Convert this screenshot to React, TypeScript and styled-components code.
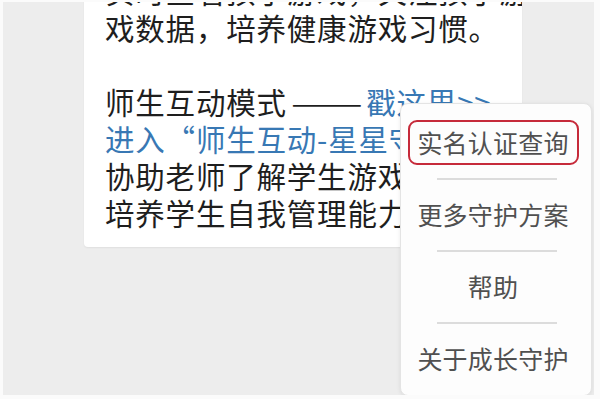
import React from "react";
import styled, { createGlobalStyle } from "styled-components";

const GlobalStyles = createGlobalStyle`
  html,
  body {
    margin: 0;
    background: #ffffff;
  }

  body {
    font-family: "Noto Sans CJK SC", "Noto Sans", sans-serif;
  }
`;

const Page = styled.div`
  position: relative;
  box-sizing: border-box;
  width: 600px;
  height: 399px;
  overflow: hidden;
  background: #ededed;
  border-style: solid;
  border-color: #fbfbfb;
  border-width: 2px 6px 4px 3px;
  padding-left: 81px;
`;

const Bubble = styled.div`
  box-sizing: border-box;
  width: 438px;
  margin-top: -47px;
  padding: 17px 21px 16px;
  background: #ffffff;
  border-radius: 4px;
  box-shadow: 0 1px 2px rgba(0, 0, 0, 0.06);
  overflow: hidden;
`;

const Paragraph = styled.p`
  margin: 0 0 37px;
  color: #1e1e1e;
  font-size: 29.5px;
  line-height: 37px;
  letter-spacing: 0.8px;
  white-space: nowrap;

  &:last-child {
    margin-bottom: 0;
  }
`;

const Link = styled.span`
  color: #3878b4;
`;

const Dash = styled.span`
  display: inline-block;
  transform: scaleX(1.45);
  transform-origin: left center;
  margin: 0 28px 0 4px;
  letter-spacing: -2px;
`;

const Menu = styled.ul`
  position: absolute;
  left: 397px;
  top: 101px;
  box-sizing: border-box;
  width: 192px;
  margin: 0;
  padding: 3px 0 0;
  list-style: none;
  background: #fdfdfd;
  border: 1px solid #e4e4e4;
  border-radius: 8px;
  box-shadow: 0 1px 4px rgba(0, 0, 0, 0.08);

  &::after {
    content: "";
    position: absolute;
    left: 110px;
    bottom: -5px;
    width: 8px;
    height: 8px;
    background: #fdfdfd;
    border-right: 1px solid #e4e4e4;
    border-bottom: 1px solid #e4e4e4;
    transform: rotate(45deg);
  }
`;

const MenuItem = styled.li`
  display: flex;
  align-items: center;
  justify-content: center;
  height: 72px;
  position: relative;

  & + &::before {
    content: "";
    position: absolute;
    top: -1px;
    left: 36px;
    right: 34px;
    height: 2px;
    background: #dcdcdc;
  }
`;

const MenuLabel = styled.span<{ $marked?: boolean }>`
  display: flex;
  align-items: center;
  justify-content: center;
  box-sizing: border-box;
  width: 171px;
  height: 45px;
  margin: 0 6px 2px 0;
  color: #505050;
  font-size: 25px;
  letter-spacing: 0.2px;
  border: 2.5px solid ${(p) => (p.$marked ? "#c62a3a" : "transparent")};
  border-radius: 9px;
`;

const items = ["实名认证查询", "更多守护方案", "帮助", "关于成长守护"];

const App: React.FC = () => {
  return (
    <Page>
      <GlobalStyles />
      <Bubble>
        <Paragraph>
          实时查看孩子游戏，关注孩子游
          <br />
          戏数据，培养健康游戏习惯。
        </Paragraph>
        <Paragraph>
          师生互动模式<Dash>——</Dash><Link>戳这里&gt;&gt;</Link>
          <br />
          <Link>进入“师生互动-星星守护”</Link>
          <br />
          协助老师了解学生游戏情况，
          <br />
          培养学生自我管理能力。
        </Paragraph>
      </Bubble>
      <Menu>
        {items.map((label, i) => (
          <MenuItem key={label}>
            <MenuLabel $marked={i === 0}>{label}</MenuLabel>
          </MenuItem>
        ))}
      </Menu>
    </Page>
  );
};

export default App;
